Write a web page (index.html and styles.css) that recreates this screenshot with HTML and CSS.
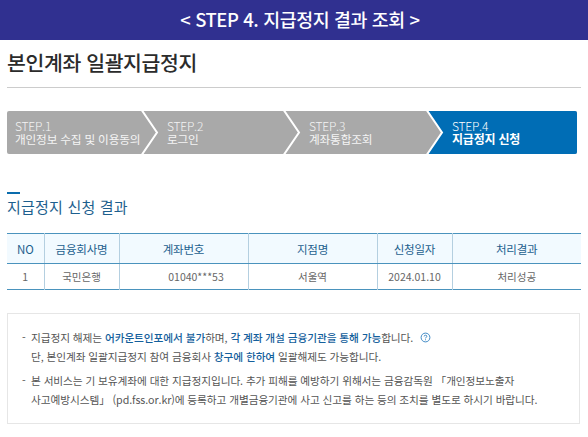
FILE: index.html
```html
<!DOCTYPE html>
<html lang="ko">
    <head>
        <meta charset="utf-8">
        <title>STEP 4. 지급정지 결과 조회</title>
        <link rel="stylesheet" href="styles.css">
    </head>
    <body>
        <header class="top-bar">&lt; STEP 4. 지급정지 결과 조회 &gt;</header>
        <main class="content">
            <h1 class="page-title">본인계좌 일괄지급정지</h1>
            <ol class="steps">
                <li class="step">
                    <span class="step-no">STEP.1</span>
                    <span class="step-name">개인정보 수집 및 이용동의</span>
                    <svg class="step-arrow" viewBox="0 0 20 43" aria-hidden="true"><path class="arrow-fill" d="M0 -2H1L17 21.500L1 45H0Z"/><path class="arrow-line" d="M1 -2L17 21.500L1 45"/></svg>
                </li>
                <li class="step">
                    <span class="step-no">STEP.2</span>
                    <span class="step-name">로그인</span>
                    <svg class="step-arrow" viewBox="0 0 20 43" aria-hidden="true"><path class="arrow-fill" d="M0 -2H1L17 21.500L1 45H0Z"/><path class="arrow-line" d="M1 -2L17 21.500L1 45"/></svg>
                </li>
                <li class="step">
                    <span class="step-no">STEP.3</span>
                    <span class="step-name">계좌통합조회</span>
                    <svg class="step-arrow" viewBox="0 0 20 43" aria-hidden="true"><path class="arrow-fill" d="M0 -2H1L17 21.500L1 45H0Z"/><path class="arrow-line" d="M1 -2L17 21.500L1 45"/></svg>
                </li>
                <li class="step step-active">
                    <span class="step-no">STEP.4</span>
                    <span class="step-name">지급정지 신청</span>
                </li>
            </ol>
            <h2 class="section-title">지급정지 신청 결과</h2>
            <table class="result">
                <thead>
                    <tr>
                        <th class="col-no">NO</th>
                        <th class="col-bank">금융회사명</th>
                        <th class="col-account">계좌번호</th>
                        <th class="col-branch">지점명</th>
                        <th class="col-date">신청일자</th>
                        <th>처리결과</th>
                    </tr>
                </thead>
                <tbody>
                    <tr>
                        <td>1</td>
                        <td>국민은행</td>
                        <td class="cell-account">01040***53</td>
                        <td>서울역</td>
                        <td>2024.01.10</td>
                        <td>처리성공</td>
                    </tr>
                </tbody>
            </table>
            <div class="notice">
                <p class="notice-item">지급정지 해제는 <b>어카운트인포에서 불가</b>하며, <b>각 계좌 개설 금융기관을 통해 가능</b>합니다.
                    <svg class="help" viewBox="0 0 12 12" aria-hidden="true"><circle cx="6" cy="6" r="4.800"/><path d="M4.500 4.800C4.500 3.900 5.200 3.500 6 3.500C6.900 3.500 7.500 4 7.500 4.700C7.500 5.700 6 5.700 6 7"/><path d="M6 8V9"/></svg>
                    <br>단, 본인계좌 일괄지급정지 참여 금융회사 <b>창구에 한하여</b> 일괄해제도 가능합니다.</p>
                <p class="notice-item">본 서비스는 기 보유계좌에 대한 지급정지입니다. 추가 피해를 예방하기 위해서는 금융감독원 「개인정보노출자<br>사고예방시스템」 (pd.fss.or.kr)에 등록하고 개별금융기관에 사고 신고를 하는 등의 조치를 별도로 하시기 바랍니다.</p>
            </div>
        </main>
    </body>
</html>
```

FILE: styles.css
```css
* {
    box-sizing: border-box;
}
body {
    margin: 0;
    background-color: #fff;
    font-family: "Noto Sans CJK KR", "Noto Sans", sans-serif;
    color: #555;
}
.top-bar {
    height: 40px;
    padding-left: 12px;
    background-color: #303090;
    color: #fff;
    font-size: 18.400px;
    font-weight: 500;
    line-height: 39px;
    letter-spacing: -0.4px;
    text-align: center;
}
.content {
    padding: 0 7px;
}
.page-title {
    height: 48px;
    margin: 0;
    border-bottom: 1px solid #ccc;
    color: #2b2b2b;
    font-size: 20.500px;
    font-weight: 500;
    line-height: 44px;
    letter-spacing: -0.4px;
}
.steps {
    display: grid;
    grid-template-columns: 134px 142px 143px 1fr;
    height: 43px;
    margin: 23px 4px 0 0;
    padding: 0;
    border-radius: 2px;
    background-color: #a9a9a9;
    list-style: none;
}
.step {
    position: relative;
    display: flex;
    flex-direction: column;
    justify-content: center;
    padding: 0 0 1px 8px;
    color: #f4f4f4;
    font-size: 11.700px;
    line-height: 13px;
    letter-spacing: -0.2px;
    white-space: nowrap;
}
.step + .step {
    padding-left: 26px;
}
.step-no {
    font-size: 12px;
    font-weight: 300;
}
.step-arrow {
    position: absolute;
    top: 0;
    left: 100%;
    z-index: 1;
    width: 20px;
    height: 43px;
    margin-left: -1px;
    overflow: hidden;
}
.arrow-fill {
    fill: #a9a9a9;
}
.arrow-line {
    fill: none;
    stroke: #fff;
    stroke-width: 2;
}
.step-active {
    border-radius: 0 2px 2px 0;
    background-color: #006db5;
    color: #fff;
}
.step-active .step-name {
    font-size: 12px;
    font-weight: 700;
}
.section-title {
    position: relative;
    margin: 38px 0 0;
    padding-top: 3px;
    color: #1d5f8e;
    font-size: 15px;
    font-weight: 400;
    line-height: 24px;
    letter-spacing: 0.2px;
}
.section-title::before {
    content: "";
    position: absolute;
    top: 0;
    left: 0;
    width: 13px;
    height: 2px;
    background-color: #0a6cad;
}
.result {
    width: 100%;
    margin-top: 14px;
    border-top: 1px solid #4a93bd;
    border-bottom: 1px solid #4a93bd;
    border-collapse: collapse;
    table-layout: fixed;
}
.result th,
.result td {
    padding: 0;
    border-left: 1px solid #b4cfe0;
    text-align: center;
    font-weight: 400;
}
.result th:first-child,
.result td:first-child {
    border-left: 0;
}
.result th {
    height: 30px;
    border-bottom: 1px solid #4a93bd;
    background-color: #f2faff;
    color: #1d5f8e;
    font-size: 11.500px;
    letter-spacing: -0.2px;
}
.result td {
    height: 26px;
    color: #666;
    font-size: 10.500px;
}
.result .cell-account {
    padding-left: 25px;
}
.col-no {
    width: 37px;
}
.col-bank {
    width: 75px;
}
.col-account {
    width: 129px;
}
.col-branch {
    width: 129px;
}
.col-date {
    width: 75px;
}
.notice {
    margin: 23px 1px 0 0;
    padding: 14px 14px 14px;
    border: 1px solid #e6e6e6;
    color: #555;
    font-size: 10.700px;
    line-height: 19px;
    letter-spacing: -0.1px;
    white-space: nowrap;
}
.notice-item {
    position: relative;
    margin: 0 0 5px;
    padding-left: 9px;
}
.notice-item:last-child {
    margin-bottom: 0;
}
.notice-item::before {
    content: "-";
    position: absolute;
    top: 0;
    left: 0;
}
.notice b {
    color: #14609c;
    font-weight: 500;
}
.help {
    width: 11px;
    height: 11px;
    margin-left: 4px;
    vertical-align: -1px;
    fill: none;
    stroke: #2f7fc0;
    stroke-width: 1;
}
```
